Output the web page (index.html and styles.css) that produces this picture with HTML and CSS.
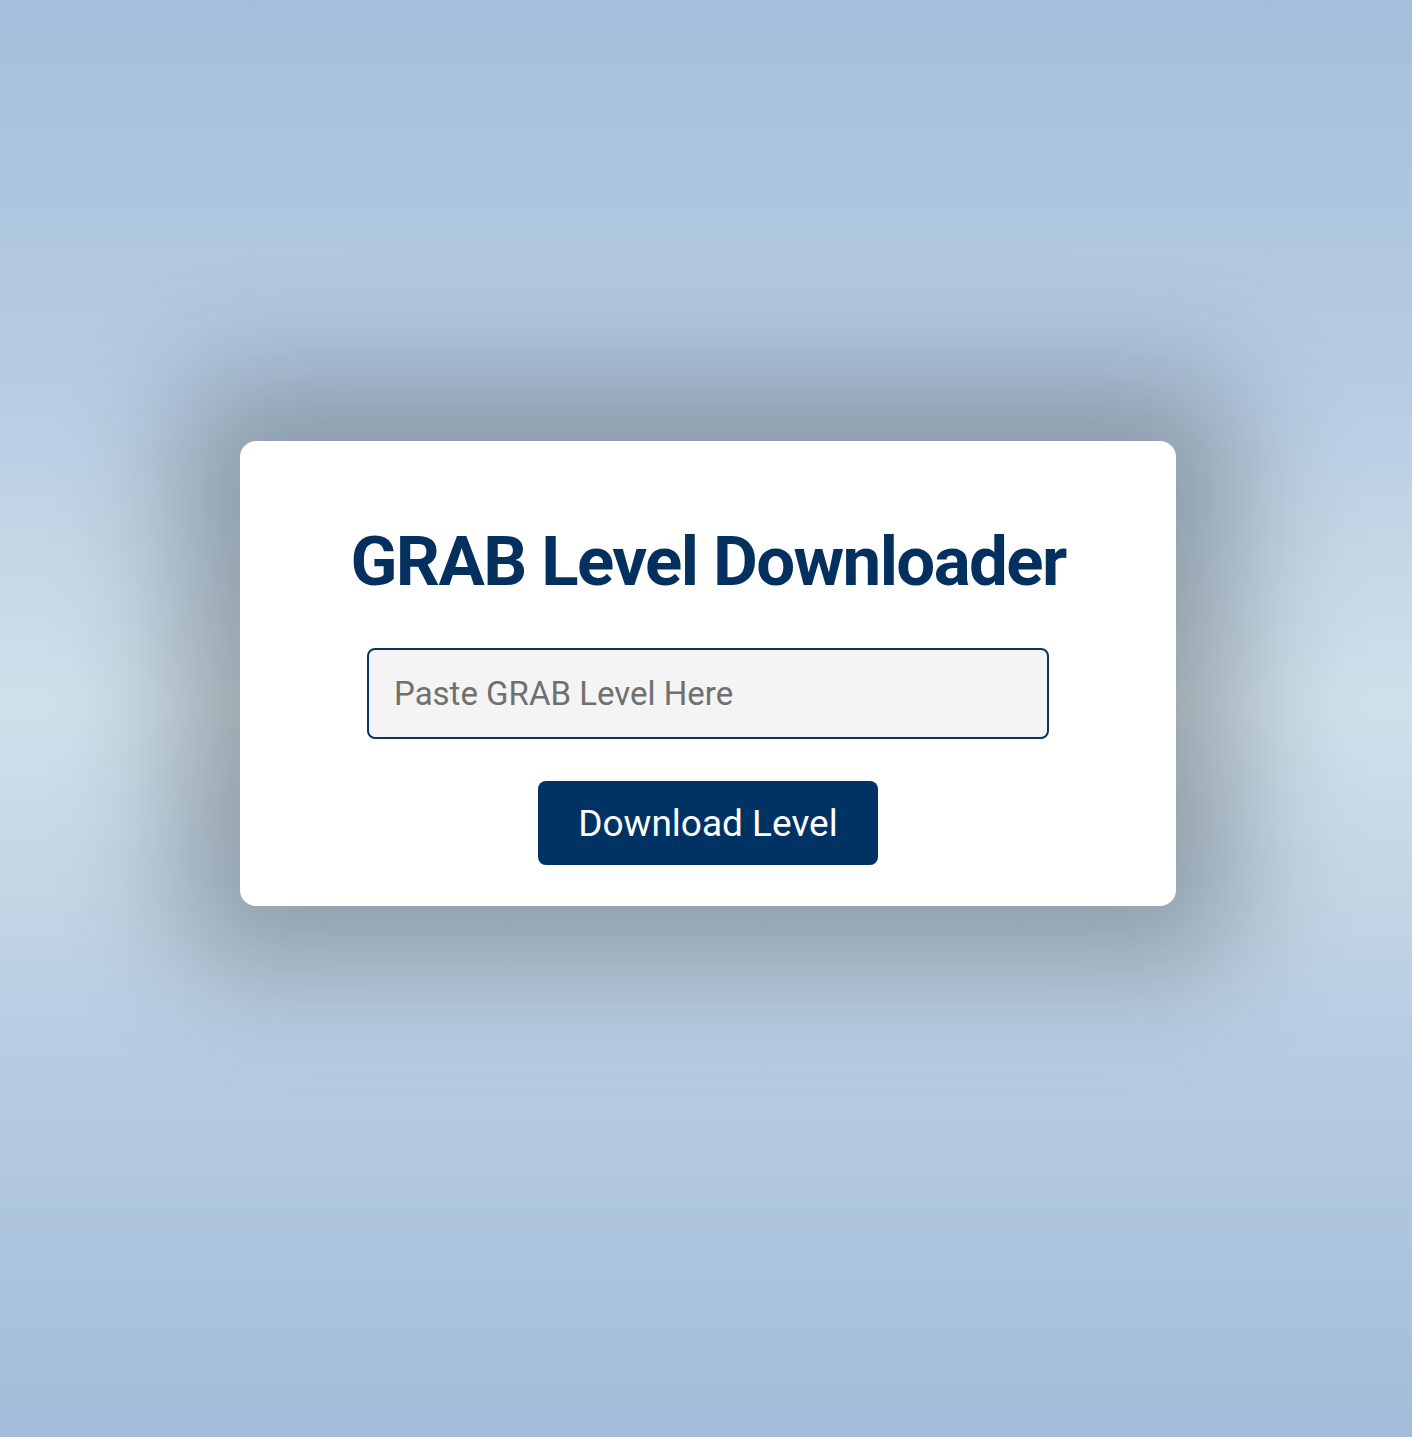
FILE: index.html
```html
<!DOCTYPE html>
<html lang="en">
<head>
<meta charset="utf-8">
<title>GRAB Level Downloader</title>
<link rel="stylesheet" href="styles.css">
</head>
<body>
<main class="page">
  <section class="card">
    <h1 class="title">GRAB Level Downloader</h1>
    <input class="level-input" type="text" placeholder="Paste GRAB Level Here">
    <button class="download-btn" type="button">Download Level</button>
  </section>
</main>
</body>
</html>
```

FILE: styles.css
```css
html, body {
  margin: 0;
  padding: 0;
}
body {
  min-height: 1437px;
  font-family: Roboto, "Liberation Sans", sans-serif;
  background: linear-gradient(to bottom, #a5bedb 0%, #b5cbe2 25%, #cfe0ea 49%, #b5cbe1 75%, #a3bcd9 100%);
}
.page {
  display: flex;
  justify-content: center;
  padding: 441px 0 0 4px;
}
.card {
  width: 936px;
  height: 465px;
  box-sizing: border-box;
  background: #ffffff;
  border-radius: 16px;
  box-shadow: 0 0 120px 60px rgba(0, 0, 0, 0.27);
  display: flex;
  flex-direction: column;
  align-items: center;
  padding: 82px 40px 41px;
}
.title {
  margin: 0;
  font-size: 69px;
  font-weight: 700;
  line-height: 78px;
  letter-spacing: -1.6px;
  color: #03305f;
}
.level-input {
  margin-top: 47px;
  width: 682px;
  height: 91px;
  box-sizing: border-box;
  border: 2px solid #0b3560;
  border-radius: 8px;
  background: #f4f4f4;
  padding: 0 25px;
  font-family: Roboto, "Liberation Sans", sans-serif;
  font-size: 33px;
  color: #333;
  outline: none;
}
.level-input::placeholder {
  color: #707070;
}
.download-btn {
  margin-top: 42px;
  width: 340px;
  height: 84px;
  border: none;
  border-radius: 8px;
  background: #003264;
  color: #ffffff;
  font-family: Roboto, "Liberation Sans", sans-serif;
  font-size: 37px;
  cursor: pointer;
}
```
